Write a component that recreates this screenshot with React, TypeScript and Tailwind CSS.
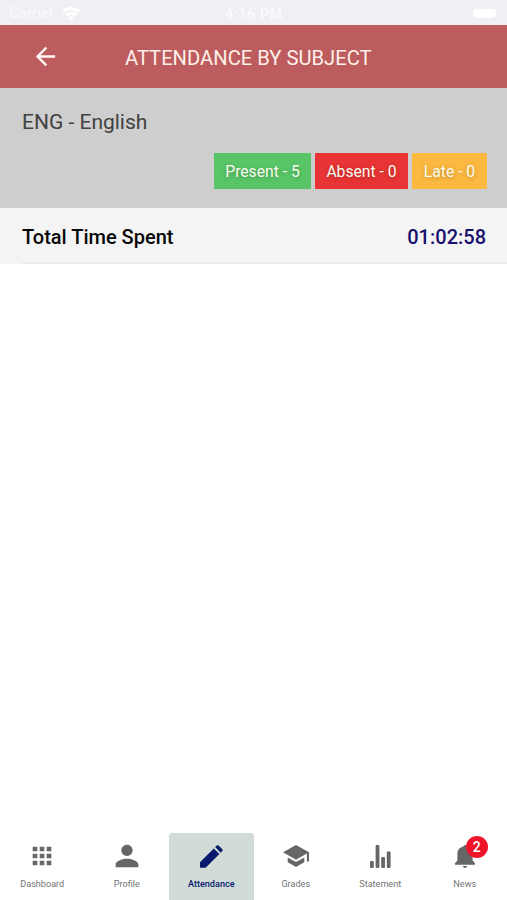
import type { ReactNode } from "react";
import { MdApps, MdArrowBack, MdPerson } from "react-icons/md";

function StatusBar() {
  return (
    <div className="grid h-[25px] grid-cols-3 items-center bg-[#eff0f4] pr-[11px] pl-[9px] pt-[2px] text-[14px] text-[#fafbfe]">
      <div className="flex items-center gap-[8px]">
        <span className="tracking-[0.5px]">Carrier</span>
        <svg width="18" height="14" viewBox="0 0 18 14" fill="none" stroke="#ffffff" strokeWidth="2.9">
          <path d="M1 4.8a11.4 11.4 0 0 1 16 0" />
          <path d="M4 8.3a7.1 7.1 0 0 1 10 0" />
          <path d="M9 13.5 6.2 10.6a4 4 0 0 1 5.6 0z" fill="#ffffff" stroke="none" />
        </svg>
      </div>
      <span className="pl-[3px] pt-[1px] text-center font-medium tracking-[0.8px] whitespace-nowrap">4:16 PM</span>
      <div className="h-[9px] w-[23px] justify-self-end rounded-[4px] bg-white" />
    </div>
  );
}

function Badge({ className, children }: { className: string; children: ReactNode }) {
  return (
    <span
      className={`flex h-9 items-center justify-center pt-[2px] text-[15.7px] text-[#fbfbee] [text-shadow:0_1px_5px_rgba(0,0,0,0.28)] ${className}`}
    >
      {children}
    </span>
  );
}

function Tab({ icon, label, active }: { icon: ReactNode; label: string; active?: boolean }) {
  return (
    <div
      className={`flex flex-1 flex-col items-center rounded-t-[3px] text-[9.1px] leading-3 ${
        active ? "bg-[#d1dbd8] font-medium text-[#071a6c]" : "text-[#747474]"
      }`}
    >
      <div className={`mt-[6px] flex h-[34px] items-center justify-center ${active ? "" : "text-[#666666]"}`}>
        {icon}
      </div>
      <span className="mt-[5px]">{label}</span>
    </div>
  );
}

function PencilIcon() {
  return (
    <svg width="23" height="23" viewBox="0 0 23 23" fill="currentColor">
      <path d="M0 17.2V22.2q0 .6.6.6H5.6L19.4 9 13.8 3.4zM15.1 2.1 16.8.6q.9-.9 1.8 0l3.7 3.7q.9.9 0 1.8L20.7 7.7z" />
    </svg>
  );
}

function CapIcon() {
  return (
    <svg width="26" height="22" viewBox="1 3 22 18" preserveAspectRatio="none" fill="currentColor">
      <path d="M5 13.18v4L12 21l7-3.82v-4L12 17zM12 3 1 9l11 6 9.2-5V16.5H23V9z" />
    </svg>
  );
}

function BarsIcon() {
  return (
    <svg width="21" height="23" viewBox="0 0 21 23" fill="currentColor">
      <rect x="0" y="16" width="3.8" height="7" rx="1" />
      <rect x="5.6" y="0" width="3.8" height="23" rx="1" />
      <rect x="11.2" y="12" width="3.8" height="11" rx="1" />
      <rect x="16.8" y="6.5" width="3.8" height="16.5" rx="1" />
    </svg>
  );
}

function BellIcon() {
  return (
    <svg width="20" height="23" viewBox="0 0 20 23" fill="currentColor">
      <path d="M8.4 1.6a1.6 1.6 0 0 1 3.2 0C15.5 2.4 17.6 5.2 17.6 9v6.5l2.4 2.7v1.5H0v-1.5l2.4-2.7V9C2.4 5.2 4.5 2.4 8.4 1.6zM7.8 21h4.4q-.6 2-2.2 2t-2.2-2z" />
    </svg>
  );
}

export default function App() {
  return (
    <div className="flex h-[900px] w-[507px] flex-col overflow-hidden bg-white font-['Roboto',sans-serif]">
      <StatusBar />
      <header className="flex h-[63px] items-center bg-[#bc5c5e] pl-[31px]">
        <MdArrowBack size={29} color="#fff8f2" />
        <h1 className="ml-[65px] pt-[3px] text-[20.2px] text-[#fff0e9]">ATTENDANCE BY SUBJECT</h1>
      </header>
      <section className="h-[119.5px] bg-[#cecece] pt-5 pr-[20px] pl-[22px]">
        <h2 className="text-[21px] leading-7 text-[#414141]">ENG - English</h2>
        <div className="mt-[17px] flex justify-end gap-1">
          <Badge className="w-[97px] bg-[#58c667]">Present - 5</Badge>
          <Badge className="w-[93px] bg-[#e83434]">Absent - 0</Badge>
          <Badge className="w-[75px] bg-[#fcb941]">Late - 0</Badge>
        </div>
      </section>
      <section className="h-[56.5px] bg-[#f4f4f4] pl-[22px]">
        <div className="flex h-full items-center justify-between border-b-2 border-[#ebebeb] pt-[4px] pr-[21px] text-[20px] font-medium">
          <span className="text-[#080808]">Total Time Spent</span>
          <span className="text-[#19106e]">01:02:58</span>
        </div>
      </section>
      <main className="flex-1" />
      <nav className="flex h-[67px]">
        <Tab icon={<MdApps size={28} />} label="Dashboard" />
        <Tab icon={<MdPerson size={34} />} label="Profile" />
        <Tab icon={<PencilIcon />} label="Attendance" active />
        <Tab icon={<CapIcon />} label="Grades" />
        <Tab icon={<BarsIcon />} label="Statement" />
        <Tab
          icon={
            <div className="relative">
              <BellIcon />
              <span className="absolute -top-[9px] left-[11px] flex size-[22px] items-center justify-center rounded-full bg-[#ef1429] text-[14px] font-medium text-white">
                2
              </span>
            </div>
          }
          label="News"
        />
      </nav>
    </div>
  );
}
